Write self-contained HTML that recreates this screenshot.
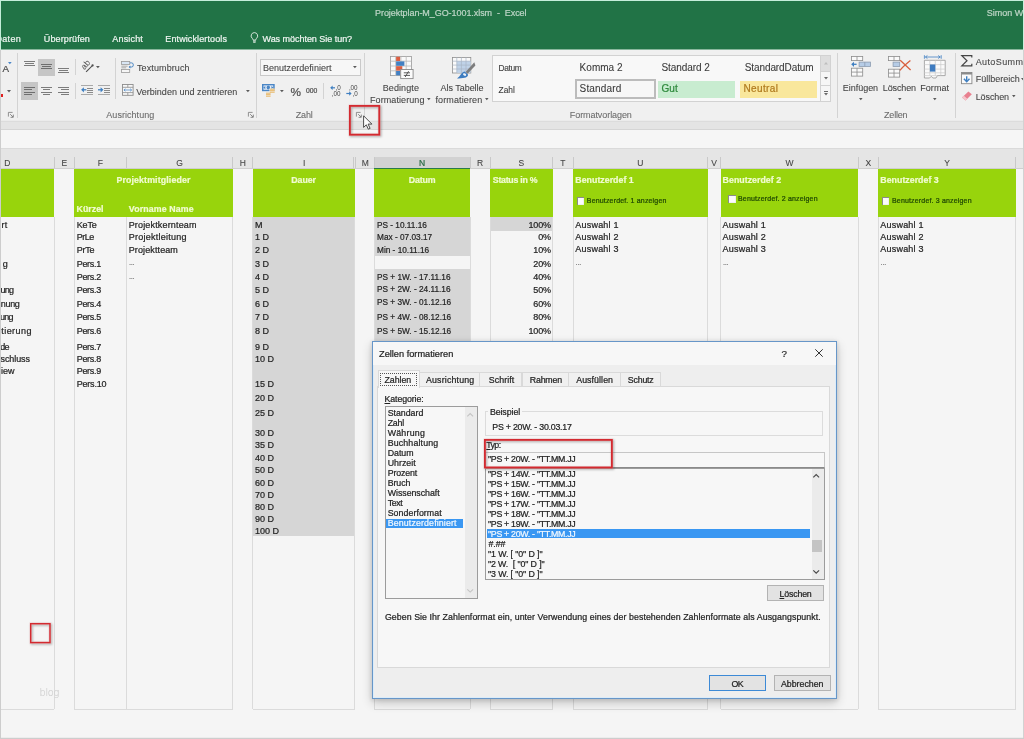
<!DOCTYPE html>
<html lang="de"><head><meta charset="utf-8"><title>Projektplan-M_GO-1001.xlsm - Excel</title>
<style>
html,body{margin:0;padding:0}
body{width:1024px;height:739px;overflow:hidden;background:#f5f5f5;font-family:"Liberation Sans",sans-serif;position:relative}
#r{position:absolute;left:0;top:0;width:1024px;height:739px;overflow:hidden;will-change:transform}
#r div,#r span,#r svg{position:absolute;display:block}
#r span{white-space:pre;line-height:1;-webkit-text-stroke:0.22px}
#r svg{overflow:visible}
</style></head><body><div id="r">
<div style="left:1.00px;top:1.00px;width:1022.00px;height:48.00px;background:#217346;"></div>
<div style="left:1.00px;top:49.00px;width:1022.00px;height:1.00px;background:#89b79d;"></div>
<div style="left:1.00px;top:50.00px;width:1022.00px;height:71.00px;background:#f0f0f0;"></div>
<div style="left:1.00px;top:121.00px;width:1022.00px;height:9.00px;background:#e4e4e4;"></div>
<div style="left:1.00px;top:120.00px;width:1022.00px;height:1.00px;background:#ebebeb;"></div>
<div style="left:1.00px;top:121.00px;width:1022.00px;height:1.00px;background:#dcdcdc;"></div>
<div style="left:1.00px;top:129.00px;width:1022.00px;height:1.00px;background:#d5d5d5;"></div>
<div style="left:1.00px;top:130.00px;width:1022.00px;height:18.00px;background:#f6f6f6;"></div>
<div style="left:1.00px;top:148.00px;width:1022.00px;height:21.00px;background:#e5e5e5;"></div>
<div style="left:1.00px;top:148.00px;width:1022.00px;height:1.00px;background:#dadada;"></div>
<span style="left:375.00px;top:9.00px;font-size:9.0px;color:#bdd5c6;letter-spacing:-0.057px;">Projektplan-M_GO-1001.xlsm  -  Excel</span>
<span style="left:986.80px;top:9.00px;font-size:9.0px;color:#bdd5c6;">Simon Wagner</span>
<span style="left:-4.50px;top:35.00px;font-size:9.0px;color:#eef4f0;letter-spacing:0.297px;">Daten</span>
<span style="left:43.80px;top:35.00px;font-size:9.0px;color:#eef4f0;letter-spacing:0.117px;">Überprüfen</span>
<span style="left:112.30px;top:35.00px;font-size:9.0px;color:#eef4f0;letter-spacing:0.169px;">Ansicht</span>
<span style="left:165.30px;top:35.00px;font-size:9.0px;color:#eef4f0;letter-spacing:0.112px;">Entwicklertools</span>
<span style="left:262.50px;top:35.00px;font-size:9.0px;color:#eef4f0;letter-spacing:-0.031px;">Was möchten Sie tun?</span>
<svg style="left:249.50px;top:32.20px;" width="9" height="11" viewBox="0 0 9 11"><path d="M4.4 0.6a3.3 3.3 0 0 0-2 5.9c.5.5.6 1 .6 1.6h2.8c0-.6.1-1.1.6-1.6a3.3 3.3 0 0 0-2-5.9z" fill="none" stroke="#e6efe9" stroke-width="0.9"/><path d="M3 9.1h2.8M3.2 10.3h2.4" stroke="#e6efe9" stroke-width="0.9"/></svg>
<div style="left:374.20px;top:157.00px;width:95.90px;height:11.80px;background:#d2d2d2;"></div>
<div style="left:374.20px;top:167.80px;width:95.90px;height:1.20px;background:#2a7a4b;"></div>
<div style="left:53.80px;top:157.00px;width:1.00px;height:11.80px;background:#c9c9c9;"></div>
<span style="left:4.20px;top:159.00px;font-size:8.5px;color:#444;-webkit-text-stroke:0.08px;">D</span>
<div style="left:73.80px;top:157.00px;width:1.00px;height:11.80px;background:#c9c9c9;"></div>
<span style="left:61.47px;top:159.00px;font-size:8.5px;color:#444;-webkit-text-stroke:0.08px;">E</span>
<div style="left:126.00px;top:157.00px;width:1.00px;height:11.80px;background:#c9c9c9;"></div>
<span style="left:97.80px;top:159.00px;font-size:8.5px;color:#444;-webkit-text-stroke:0.08px;">F</span>
<div style="left:232.30px;top:157.00px;width:1.00px;height:11.80px;background:#c9c9c9;"></div>
<span style="left:176.34px;top:159.00px;font-size:8.5px;color:#444;-webkit-text-stroke:0.08px;">G</span>
<div style="left:252.20px;top:157.00px;width:1.00px;height:11.80px;background:#c9c9c9;"></div>
<span style="left:239.68px;top:159.00px;font-size:8.5px;color:#444;-webkit-text-stroke:0.08px;">H</span>
<div style="left:355.10px;top:157.00px;width:1.00px;height:11.80px;background:#c9c9c9;"></div>
<span style="left:302.97px;top:159.00px;font-size:8.5px;color:#444;-webkit-text-stroke:0.08px;">I</span>
<div style="left:373.70px;top:157.00px;width:1.00px;height:11.80px;background:#c9c9c9;"></div>
<span style="left:361.66px;top:159.00px;font-size:8.5px;color:#444;-webkit-text-stroke:0.08px;">M</span>
<div style="left:469.60px;top:157.00px;width:1.00px;height:11.80px;background:#c9c9c9;"></div>
<span style="left:419.08px;top:159.00px;font-size:8.5px;color:#2a6b45;">N</span>
<div style="left:489.50px;top:157.00px;width:1.00px;height:11.80px;background:#c9c9c9;"></div>
<span style="left:476.98px;top:159.00px;font-size:8.5px;color:#444;-webkit-text-stroke:0.08px;">R</span>
<div style="left:552.10px;top:157.00px;width:1.00px;height:11.80px;background:#c9c9c9;"></div>
<span style="left:518.47px;top:159.00px;font-size:8.5px;color:#444;-webkit-text-stroke:0.08px;">S</span>
<div style="left:572.70px;top:157.00px;width:1.00px;height:11.80px;background:#c9c9c9;"></div>
<span style="left:560.30px;top:159.00px;font-size:8.5px;color:#444;-webkit-text-stroke:0.08px;">T</span>
<div style="left:707.10px;top:157.00px;width:1.00px;height:11.80px;background:#c9c9c9;"></div>
<span style="left:637.33px;top:159.00px;font-size:8.5px;color:#444;-webkit-text-stroke:0.08px;">U</span>
<div style="left:720.00px;top:157.00px;width:1.00px;height:11.80px;background:#c9c9c9;"></div>
<span style="left:711.22px;top:159.00px;font-size:8.5px;color:#444;-webkit-text-stroke:0.08px;">V</span>
<div style="left:857.80px;top:157.00px;width:1.00px;height:11.80px;background:#c9c9c9;"></div>
<span style="left:785.39px;top:159.00px;font-size:8.5px;color:#444;-webkit-text-stroke:0.08px;">W</span>
<div style="left:877.70px;top:157.00px;width:1.00px;height:11.80px;background:#c9c9c9;"></div>
<span style="left:865.42px;top:159.00px;font-size:8.5px;color:#444;-webkit-text-stroke:0.08px;">X</span>
<div style="left:1015.30px;top:157.00px;width:1.00px;height:11.80px;background:#c9c9c9;"></div>
<span style="left:944.17px;top:159.00px;font-size:8.5px;color:#444;-webkit-text-stroke:0.08px;">Y</span>
<div style="left:353.10px;top:157.00px;width:1.00px;height:11.80px;background:#c9c9c9;"></div>
<div style="left:1.20px;top:168.40px;width:1021.50px;height:0.60px;background:#cfcfcf;"></div>
<div style="left:374.20px;top:167.80px;width:95.90px;height:1.20px;background:#2a7a4b;"></div>
<div style="left:1.30px;top:169.00px;width:53.00px;height:48.30px;background:#98d40c;"></div>
<div style="left:1.30px;top:708.80px;width:53.00px;height:1.00px;background:#dbdbdb;"></div>
<div style="left:53.80px;top:217.30px;width:1.00px;height:492.00px;background:#dbdbdb;"></div>
<div style="left:74.30px;top:169.00px;width:158.50px;height:48.30px;background:#98d40c;"></div>
<div style="left:74.30px;top:708.80px;width:158.50px;height:1.00px;background:#dbdbdb;"></div>
<div style="left:73.80px;top:217.30px;width:1.00px;height:492.00px;background:#dbdbdb;"></div>
<div style="left:232.30px;top:217.30px;width:1.00px;height:492.00px;background:#dbdbdb;"></div>
<div style="left:252.70px;top:169.00px;width:102.10px;height:48.30px;background:#98d40c;"></div>
<div style="left:252.70px;top:708.80px;width:102.10px;height:1.00px;background:#dbdbdb;"></div>
<div style="left:252.20px;top:217.30px;width:1.00px;height:492.00px;background:#dbdbdb;"></div>
<div style="left:354.30px;top:217.30px;width:1.00px;height:492.00px;background:#dbdbdb;"></div>
<div style="left:374.20px;top:169.00px;width:95.90px;height:48.30px;background:#98d40c;"></div>
<div style="left:374.20px;top:708.80px;width:95.90px;height:1.00px;background:#dbdbdb;"></div>
<div style="left:373.70px;top:217.30px;width:1.00px;height:492.00px;background:#dbdbdb;"></div>
<div style="left:469.60px;top:217.30px;width:1.00px;height:492.00px;background:#dbdbdb;"></div>
<div style="left:490.00px;top:169.00px;width:62.60px;height:48.30px;background:#98d40c;"></div>
<div style="left:490.00px;top:708.80px;width:62.60px;height:1.00px;background:#dbdbdb;"></div>
<div style="left:489.50px;top:217.30px;width:1.00px;height:492.00px;background:#dbdbdb;"></div>
<div style="left:552.10px;top:217.30px;width:1.00px;height:492.00px;background:#dbdbdb;"></div>
<div style="left:573.20px;top:169.00px;width:134.40px;height:48.30px;background:#98d40c;"></div>
<div style="left:573.20px;top:708.80px;width:134.40px;height:1.00px;background:#dbdbdb;"></div>
<div style="left:572.70px;top:217.30px;width:1.00px;height:492.00px;background:#dbdbdb;"></div>
<div style="left:707.10px;top:217.30px;width:1.00px;height:492.00px;background:#dbdbdb;"></div>
<div style="left:720.50px;top:169.00px;width:137.80px;height:48.30px;background:#98d40c;"></div>
<div style="left:720.50px;top:708.80px;width:137.80px;height:1.00px;background:#dbdbdb;"></div>
<div style="left:720.00px;top:217.30px;width:1.00px;height:492.00px;background:#dbdbdb;"></div>
<div style="left:857.80px;top:217.30px;width:1.00px;height:492.00px;background:#dbdbdb;"></div>
<div style="left:878.20px;top:169.00px;width:137.60px;height:48.30px;background:#98d40c;"></div>
<div style="left:878.20px;top:708.80px;width:137.60px;height:1.00px;background:#dbdbdb;"></div>
<div style="left:877.70px;top:217.30px;width:1.00px;height:492.00px;background:#dbdbdb;"></div>
<div style="left:1015.30px;top:217.30px;width:1.00px;height:492.00px;background:#dbdbdb;"></div>
<div style="left:126.00px;top:217.30px;width:1.00px;height:492.00px;background:#dbdbdb;"></div>
<div style="left:253.20px;top:217.30px;width:101.10px;height:319.20px;background:#d6d6d6;"></div>
<div style="left:374.70px;top:217.30px;width:94.90px;height:38.90px;background:#d6d6d6;"></div>
<div style="left:374.70px;top:268.60px;width:94.90px;height:76.40px;background:#d6d6d6;"></div>
<div style="left:490.50px;top:217.30px;width:61.60px;height:13.50px;background:#d6d6d6;"></div>
<span style="left:116.40px;top:176.00px;font-size:8.8px;color:#f0fbd0;font-weight:700;letter-spacing:0.136px;">Projektmitglieder</span>
<span style="left:76.60px;top:205.00px;font-size:8.8px;color:#f0fbd0;font-weight:700;letter-spacing:0.018px;">Kürzel</span>
<span style="left:128.80px;top:205.00px;font-size:8.8px;color:#f0fbd0;font-weight:700;letter-spacing:0.132px;">Vorname Name</span>
<span style="left:291.35px;top:176.00px;font-size:8.8px;color:#f0fbd0;font-weight:700;letter-spacing:-0.089px;">Dauer</span>
<span style="left:408.85px;top:176.00px;font-size:8.8px;color:#f0fbd0;font-weight:700;letter-spacing:-0.176px;">Datum</span>
<span style="left:492.80px;top:176.00px;font-size:8.8px;color:#f0fbd0;font-weight:700;letter-spacing:-0.266px;">Status in %</span>
<span style="left:575.30px;top:176.00px;font-size:8.8px;color:#f0fbd0;font-weight:700;letter-spacing:0.024px;">Benutzerdef 1</span>
<span style="left:722.60px;top:176.00px;font-size:8.8px;color:#f0fbd0;font-weight:700;letter-spacing:0.024px;">Benutzerdef 2</span>
<span style="left:880.30px;top:176.00px;font-size:8.8px;color:#f0fbd0;font-weight:700;letter-spacing:0.024px;">Benutzerdef 3</span>
<span style="left:1.60px;top:221.00px;font-size:9.0px;color:#242424;letter-spacing:0.051px;">rt</span>
<span style="left:2.70px;top:260.00px;font-size:9.0px;color:#242424;letter-spacing:-0.106px;">g</span>
<span style="left:0.40px;top:286.00px;font-size:9.0px;color:#242424;letter-spacing:-0.706px;">ung</span>
<span style="left:0.70px;top:300.00px;font-size:9.0px;color:#242424;letter-spacing:-0.281px;">nung</span>
<span style="left:-0.10px;top:313.00px;font-size:9.0px;color:#242424;letter-spacing:-0.706px;">ung</span>
<span style="left:1.30px;top:327.00px;font-size:9.0px;color:#242424;letter-spacing:0.440px;">tierung</span>
<span style="left:0.30px;top:343.00px;font-size:9.0px;color:#242424;letter-spacing:-0.706px;">de</span>
<span style="left:0.60px;top:355.00px;font-size:9.0px;color:#242424;letter-spacing:-0.116px;">schluss</span>
<span style="left:0.90px;top:367.00px;font-size:9.0px;color:#242424;letter-spacing:0.098px;">iew</span>
<span style="left:76.70px;top:221.00px;font-size:9.0px;color:#242424;letter-spacing:-0.129px;">KeTe</span>
<span style="left:76.70px;top:233.00px;font-size:9.0px;color:#242424;letter-spacing:-0.503px;">PrLe</span>
<span style="left:76.70px;top:246.00px;font-size:9.0px;color:#242424;letter-spacing:-0.227px;">PrTe</span>
<span style="left:76.70px;top:260.00px;font-size:9.0px;color:#242424;letter-spacing:-0.302px;">Pers.1</span>
<span style="left:76.70px;top:273.00px;font-size:9.0px;color:#242424;letter-spacing:-0.302px;">Pers.2</span>
<span style="left:76.70px;top:286.00px;font-size:9.0px;color:#242424;letter-spacing:-0.302px;">Pers.3</span>
<span style="left:76.70px;top:300.00px;font-size:9.0px;color:#242424;letter-spacing:-0.302px;">Pers.4</span>
<span style="left:76.70px;top:313.00px;font-size:9.0px;color:#242424;letter-spacing:-0.302px;">Pers.5</span>
<span style="left:76.70px;top:327.00px;font-size:9.0px;color:#242424;letter-spacing:-0.302px;">Pers.6</span>
<span style="left:76.70px;top:343.00px;font-size:9.0px;color:#242424;letter-spacing:-0.302px;">Pers.7</span>
<span style="left:76.70px;top:355.00px;font-size:9.0px;color:#242424;letter-spacing:-0.302px;">Pers.8</span>
<span style="left:76.70px;top:367.00px;font-size:9.0px;color:#242424;letter-spacing:-0.302px;">Pers.9</span>
<span style="left:76.70px;top:380.00px;font-size:9.0px;color:#242424;letter-spacing:-0.203px;">Pers.10</span>
<span style="left:128.70px;top:221.00px;font-size:9.0px;color:#242424;letter-spacing:0.165px;">Projektkernteam</span>
<span style="left:128.70px;top:233.00px;font-size:9.0px;color:#242424;letter-spacing:0.255px;">Projektleitung</span>
<span style="left:128.70px;top:246.00px;font-size:9.0px;color:#242424;letter-spacing:0.116px;">Projektteam</span>
<span style="left:128.90px;top:259.00px;font-size:7.5px;color:#7a7a7a;letter-spacing:-0.217px;">...</span>
<span style="left:128.90px;top:273.00px;font-size:7.5px;color:#7a7a7a;letter-spacing:-0.217px;">...</span>
<span style="left:255.00px;top:221.00px;font-size:9.0px;color:#242424;">M</span>
<span style="left:255.00px;top:233.00px;font-size:9.0px;color:#242424;">1 D</span>
<span style="left:255.00px;top:246.00px;font-size:9.0px;color:#242424;">2 D</span>
<span style="left:255.00px;top:260.00px;font-size:9.0px;color:#242424;">3 D</span>
<span style="left:255.00px;top:273.00px;font-size:9.0px;color:#242424;">4 D</span>
<span style="left:255.00px;top:286.00px;font-size:9.0px;color:#242424;">5 D</span>
<span style="left:255.00px;top:300.00px;font-size:9.0px;color:#242424;">6 D</span>
<span style="left:255.00px;top:313.00px;font-size:9.0px;color:#242424;">7 D</span>
<span style="left:255.00px;top:327.00px;font-size:9.0px;color:#242424;">8 D</span>
<span style="left:255.00px;top:343.00px;font-size:9.0px;color:#242424;">9 D</span>
<span style="left:255.00px;top:355.00px;font-size:9.0px;color:#242424;">10 D</span>
<span style="left:255.00px;top:380.00px;font-size:9.0px;color:#242424;">15 D</span>
<span style="left:255.00px;top:394.00px;font-size:9.0px;color:#242424;">20 D</span>
<span style="left:255.00px;top:409.00px;font-size:9.0px;color:#242424;">25 D</span>
<span style="left:255.00px;top:429.00px;font-size:9.0px;color:#242424;">30 D</span>
<span style="left:255.00px;top:441.00px;font-size:9.0px;color:#242424;">35 D</span>
<span style="left:255.00px;top:454.00px;font-size:9.0px;color:#242424;">40 D</span>
<span style="left:255.00px;top:466.00px;font-size:9.0px;color:#242424;">50 D</span>
<span style="left:255.00px;top:479.00px;font-size:9.0px;color:#242424;">60 D</span>
<span style="left:255.00px;top:491.00px;font-size:9.0px;color:#242424;">70 D</span>
<span style="left:255.00px;top:503.00px;font-size:9.0px;color:#242424;">80 D</span>
<span style="left:255.00px;top:515.00px;font-size:9.0px;color:#242424;">90 D</span>
<span style="left:255.00px;top:527.00px;font-size:9.0px;color:#242424;">100 D</span>
<span style="left:376.70px;top:221.00px;font-size:9.0px;color:#242424;transform:scaleX(0.9180);transform-origin:0 0;">PS - 10.11.16</span>
<span style="left:376.70px;top:233.00px;font-size:9.0px;color:#242424;transform:scaleX(0.9180);transform-origin:0 0;">Max - 07.03.17</span>
<span style="left:376.70px;top:246.00px;font-size:9.0px;color:#242424;transform:scaleX(0.9180);transform-origin:0 0;">Min - 10.11.16</span>
<span style="left:376.70px;top:273.00px;font-size:9.0px;color:#242424;transform:scaleX(0.9180);transform-origin:0 0;">PS + 1W. - 17.11.16</span>
<span style="left:376.70px;top:285.00px;font-size:9.0px;color:#242424;transform:scaleX(0.9180);transform-origin:0 0;">PS + 2W. - 24.11.16</span>
<span style="left:376.70px;top:298.00px;font-size:9.0px;color:#242424;transform:scaleX(0.9180);transform-origin:0 0;">PS + 3W. - 01.12.16</span>
<span style="left:376.70px;top:313.00px;font-size:9.0px;color:#242424;transform:scaleX(0.9180);transform-origin:0 0;">PS + 4W. - 08.12.16</span>
<span style="left:376.70px;top:327.00px;font-size:9.0px;color:#242424;transform:scaleX(0.9180);transform-origin:0 0;">PS + 5W. - 15.12.16</span>
<span style="left:528.47px;top:221.00px;font-size:9.0px;color:#242424;letter-spacing:-0.173px;">100%</span>
<span style="left:538.18px;top:233.00px;font-size:9.0px;color:#242424;letter-spacing:-0.195px;">0%</span>
<span style="left:533.33px;top:246.00px;font-size:9.0px;color:#242424;letter-spacing:-0.180px;">10%</span>
<span style="left:533.33px;top:260.00px;font-size:9.0px;color:#242424;letter-spacing:-0.180px;">20%</span>
<span style="left:533.33px;top:273.00px;font-size:9.0px;color:#242424;letter-spacing:-0.180px;">40%</span>
<span style="left:533.33px;top:286.00px;font-size:9.0px;color:#242424;letter-spacing:-0.180px;">50%</span>
<span style="left:533.33px;top:300.00px;font-size:9.0px;color:#242424;letter-spacing:-0.180px;">60%</span>
<span style="left:533.33px;top:313.00px;font-size:9.0px;color:#242424;letter-spacing:-0.180px;">80%</span>
<span style="left:528.47px;top:327.00px;font-size:9.0px;color:#242424;letter-spacing:-0.173px;">100%</span>
<span style="left:575.30px;top:221.00px;font-size:9.0px;color:#242424;letter-spacing:0.208px;">Auswahl 1</span>
<span style="left:575.30px;top:233.00px;font-size:9.0px;color:#242424;letter-spacing:0.208px;">Auswahl 2</span>
<span style="left:575.30px;top:245.00px;font-size:9.0px;color:#242424;letter-spacing:0.208px;">Auswahl 3</span>
<span style="left:575.60px;top:259.00px;font-size:7.5px;color:#7a7a7a;letter-spacing:-0.217px;">...</span>
<span style="left:722.60px;top:221.00px;font-size:9.0px;color:#242424;letter-spacing:0.208px;">Auswahl 1</span>
<span style="left:722.60px;top:233.00px;font-size:9.0px;color:#242424;letter-spacing:0.208px;">Auswahl 2</span>
<span style="left:722.60px;top:245.00px;font-size:9.0px;color:#242424;letter-spacing:0.208px;">Auswahl 3</span>
<span style="left:722.90px;top:259.00px;font-size:7.5px;color:#7a7a7a;letter-spacing:-0.217px;">...</span>
<span style="left:880.30px;top:221.00px;font-size:9.0px;color:#242424;letter-spacing:0.208px;">Auswahl 1</span>
<span style="left:880.30px;top:233.00px;font-size:9.0px;color:#242424;letter-spacing:0.208px;">Auswahl 2</span>
<span style="left:880.30px;top:245.00px;font-size:9.0px;color:#242424;letter-spacing:0.208px;">Auswahl 3</span>
<span style="left:880.60px;top:259.00px;font-size:7.5px;color:#7a7a7a;letter-spacing:-0.217px;">...</span>
<div style="left:576.80px;top:197.00px;width:7.60px;height:7.80px;background:#fbfbfb;box-shadow:inset 1px 1px 0 #8b8b8b, inset -0.5px -0.5px 0 #e4e4e4;"></div>
<span style="left:586.80px;top:197.00px;font-size:7.0px;color:#1f4704;letter-spacing:0.166px;">Benutzerdef. 1 anzeigen</span>
<div style="left:728.10px;top:195.00px;width:7.60px;height:7.80px;background:#fbfbfb;box-shadow:inset 1px 1px 0 #8b8b8b, inset -0.5px -0.5px 0 #e4e4e4;"></div>
<span style="left:738.00px;top:195.00px;font-size:7.0px;color:#1f4704;letter-spacing:0.166px;">Benutzerdef. 2 anzeigen</span>
<div style="left:881.80px;top:197.00px;width:7.60px;height:7.80px;background:#fbfbfb;box-shadow:inset 1px 1px 0 #8b8b8b, inset -0.5px -0.5px 0 #e4e4e4;"></div>
<span style="left:892.00px;top:197.00px;font-size:7.0px;color:#1f4704;letter-spacing:0.166px;">Benutzerdef. 3 anzeigen</span>
<span style="left:39.50px;top:688.00px;font-size:9.6px;color:#d2d2d2;font-family:'DejaVu Sans Light','DejaVu Sans',sans-serif;letter-spacing:-0.199px;">blog</span>
<div style="left:16.90px;top:53.00px;width:1.00px;height:64.60px;background:#d3d3d3;"></div>
<div style="left:256.10px;top:53.00px;width:1.00px;height:64.60px;background:#d3d3d3;"></div>
<div style="left:364.10px;top:53.00px;width:1.00px;height:64.60px;background:#d3d3d3;"></div>
<div style="left:836.90px;top:53.00px;width:1.00px;height:64.60px;background:#d3d3d3;"></div>
<div style="left:954.80px;top:53.00px;width:1.00px;height:64.60px;background:#d3d3d3;"></div>
<div style="left:74.50px;top:58.70px;width:1.00px;height:16.30px;background:#d3d3d3;"></div>
<div style="left:74.50px;top:82.60px;width:1.00px;height:16.20px;background:#d3d3d3;"></div>
<div style="left:114.90px;top:58.00px;width:1.00px;height:41.00px;background:#d3d3d3;"></div>
<div style="left:322.90px;top:82.50px;width:1.00px;height:16.10px;background:#d3d3d3;"></div>
<span style="left:2.40px;top:64.00px;font-size:9.8px;color:#4a4a4a;letter-spacing:-0.737px;">A</span>
<svg style="left:7.60px;top:61.50px;" width="3.7" height="2.3" viewBox="0 0 3.7 2.3"><path d="M0 0h3.7l-1.85 2.3z" fill="#4a86c8"/></svg>
<svg style="left:6.90px;top:90.10px;" width="4" height="2.4" viewBox="0 0 4 2.4"><path d="M0 0h4l-2.0 2.4z" fill="#5a5a5a"/></svg>
<div style="left:0.60px;top:93.90px;width:2.10px;height:3.10px;background:#e02020;"></div>
<svg style="left:8.00px;top:112.20px;" width="6" height="6" viewBox="0 0 6 6"><path d="M0.4 4.6V0.4H4.6" fill="none" stroke="#7a7a7a" stroke-width="0.8"/><path d="M2.2 2.2L5 5M5.3 2.6V5.3H2.6" fill="none" stroke="#7a7a7a" stroke-width="0.9"/></svg>
<div style="left:23.90px;top:60.65px;width:10.90px;height:0.90px;background:#7c7c7c;"></div>
<div style="left:24.90px;top:62.95px;width:8.90px;height:0.90px;background:#7c7c7c;"></div>
<div style="left:23.90px;top:65.15px;width:10.90px;height:0.90px;background:#7c7c7c;"></div>
<div style="left:38.00px;top:58.70px;width:16.80px;height:17.10px;background:#c6c6c6;"></div>
<div style="left:41.00px;top:64.05px;width:10.90px;height:0.90px;background:#6e6e6e;"></div>
<div style="left:42.00px;top:66.15px;width:8.90px;height:0.90px;background:#6e6e6e;"></div>
<div style="left:41.00px;top:68.25px;width:10.90px;height:0.90px;background:#6e6e6e;"></div>
<div style="left:57.80px;top:67.85px;width:10.90px;height:0.90px;background:#7c7c7c;"></div>
<div style="left:58.80px;top:70.05px;width:8.90px;height:0.90px;background:#7c7c7c;"></div>
<div style="left:57.80px;top:72.15px;width:10.90px;height:0.90px;background:#7c7c7c;"></div>
<div style="left:21.10px;top:82.40px;width:16.70px;height:17.30px;background:#c6c6c6;"></div>
<div style="left:23.90px;top:86.95px;width:10.90px;height:0.90px;background:#6e6e6e;"></div>
<div style="left:23.90px;top:89.15px;width:7.80px;height:0.90px;background:#6e6e6e;"></div>
<div style="left:23.90px;top:91.55px;width:10.90px;height:0.90px;background:#6e6e6e;"></div>
<div style="left:23.90px;top:93.95px;width:7.80px;height:0.90px;background:#6e6e6e;"></div>
<div style="left:41.00px;top:86.95px;width:10.90px;height:0.90px;background:#7c7c7c;"></div>
<div style="left:42.60px;top:89.15px;width:7.50px;height:0.90px;background:#7c7c7c;"></div>
<div style="left:41.00px;top:91.55px;width:10.90px;height:0.90px;background:#7c7c7c;"></div>
<div style="left:42.60px;top:93.95px;width:7.50px;height:0.90px;background:#7c7c7c;"></div>
<div style="left:57.80px;top:86.95px;width:10.90px;height:0.90px;background:#7c7c7c;"></div>
<div style="left:60.90px;top:89.15px;width:7.80px;height:0.90px;background:#7c7c7c;"></div>
<div style="left:57.80px;top:91.55px;width:10.90px;height:0.90px;background:#7c7c7c;"></div>
<div style="left:60.90px;top:93.95px;width:7.80px;height:0.90px;background:#7c7c7c;"></div>
<svg style="left:80.00px;top:59.00px;" width="14" height="15" viewBox="0 0 14 15"><text x="0" y="0" transform="translate(4.6,11.2) rotate(-50)" font-size="8.6" fill="#4f4f4f" font-family="Liberation Sans,sans-serif">ab</text><path d="M6.1 12.9L12.4 6.7" stroke="#4f4f4f" stroke-width="1.1"/><circle cx="12.6" cy="6.4" r="1.1" fill="#4f4f4f"/></svg>
<svg style="left:96.30px;top:66.10px;" width="3.8" height="2.3" viewBox="0 0 3.8 2.3"><path d="M0 0h3.8l-1.9 2.3z" fill="#5a5a5a"/></svg>
<div style="left:81.00px;top:85.30px;width:12.00px;height:1.00px;background:#a9a9a9;"></div>
<div style="left:81.00px;top:94.40px;width:12.00px;height:1.00px;background:#a9a9a9;"></div>
<div style="left:87.10px;top:88.05px;width:5.90px;height:0.90px;background:#8a8a8a;"></div>
<div style="left:87.10px;top:90.15px;width:5.90px;height:0.90px;background:#8a8a8a;"></div>
<div style="left:87.10px;top:92.15px;width:5.90px;height:0.90px;background:#8a8a8a;"></div>
<svg style="left:81.00px;top:87.40px;" width="6" height="5.6" viewBox="0 0 6 5.6"><path d="M1.6 2.8H5.4" stroke="#3f7fc1" stroke-width="1.3"/><path d="M2.9 0.2L0.1 2.8L2.9 5.4z" fill="#3f7fc1"/></svg>
<div style="left:97.90px;top:85.30px;width:12.00px;height:1.00px;background:#a9a9a9;"></div>
<div style="left:97.90px;top:94.40px;width:12.00px;height:1.00px;background:#a9a9a9;"></div>
<div style="left:104.00px;top:88.05px;width:5.90px;height:0.90px;background:#8a8a8a;"></div>
<div style="left:104.00px;top:90.15px;width:5.90px;height:0.90px;background:#8a8a8a;"></div>
<div style="left:104.00px;top:92.15px;width:5.90px;height:0.90px;background:#8a8a8a;"></div>
<svg style="left:97.90px;top:87.40px;" width="6" height="5.6" viewBox="0 0 6 5.6"><path d="M0 2.8H4" stroke="#3f7fc1" stroke-width="1.3"/><path d="M2.6 0.2L5.4 2.8L2.6 5.4z" fill="#3f7fc1"/></svg>
<svg style="left:121.30px;top:60.60px;" width="13" height="12" viewBox="0 0 13 12"><rect x="0.5" y="0.5" width="8.2" height="2.9" fill="#d9e6f4" stroke="#9a9a9a" stroke-width="0.8"/><path d="M0.4 5.2H6.6M0.4 6.8H5.2" stroke="#9a9a9a" stroke-width="0.8"/><rect x="0.5" y="8.5" width="8.2" height="2.9" fill="#f6f6f6" stroke="#9a9a9a" stroke-width="0.8"/><path d="M9 1.9H10.6A1.7 2 0 0 1 10.6 6H8.6" fill="none" stroke="#3f7fc1" stroke-width="0.9"/><path d="M9.3 4.5L7.6 6L9.3 7.5z" fill="#3f7fc1"/></svg>
<span style="left:137.00px;top:64.00px;font-size:9.0px;color:#444;-webkit-text-stroke:0.08px;letter-spacing:0.107px;">Textumbruch</span>
<svg style="left:121.50px;top:84.40px;" width="12" height="12" viewBox="0 0 12 12"><rect x="0.5" y="0.5" width="10.6" height="10.8" fill="#f8f8f8" stroke="#8c8c8c" stroke-width="0.9"/><path d="M0.5 3.3H11.1M0.5 8.6H11.1M5.8 0.5V3.3M5.8 8.6V11.3" stroke="#8c8c8c" stroke-width="0.8"/><path d="M2.2 6H9.4" stroke="#3f7fc1" stroke-width="0.7"/><path d="M3.4 4.7L1.9 6L3.4 7.3M8.2 4.7L9.7 6L8.2 7.3" fill="none" stroke="#3f7fc1" stroke-width="0.7"/></svg>
<span style="left:136.20px;top:88.00px;font-size:9.0px;color:#444;-webkit-text-stroke:0.08px;letter-spacing:0.026px;">Verbinden und zentrieren</span>
<svg style="left:245.60px;top:90.20px;" width="3.8" height="2.3" viewBox="0 0 3.8 2.3"><path d="M0 0h3.8l-1.9 2.3z" fill="#5a5a5a"/></svg>
<span style="left:106.30px;top:111.00px;font-size:9.0px;color:#6a6a6a;-webkit-text-stroke:0.08px;letter-spacing:0.043px;">Ausrichtung</span>
<svg style="left:248.40px;top:112.40px;" width="6" height="6" viewBox="0 0 6 6"><path d="M0.4 4.6V0.4H4.6" fill="none" stroke="#7a7a7a" stroke-width="0.8"/><path d="M2.2 2.2L5 5M5.3 2.6V5.3H2.6" fill="none" stroke="#7a7a7a" stroke-width="0.9"/></svg>
<div style="left:260.30px;top:58.60px;width:100.30px;height:17.30px;background:#f7f7f7;box-sizing:border-box;border:1px solid #c9c9c9;"></div>
<span style="left:262.90px;top:64.00px;font-size:9.0px;color:#444;-webkit-text-stroke:0.08px;letter-spacing:0.039px;">Benutzerdefiniert</span>
<svg style="left:353.20px;top:66.00px;" width="3.8" height="2.3" viewBox="0 0 3.8 2.3"><path d="M0 0h3.8l-1.9 2.3z" fill="#5a5a5a"/></svg>
<svg style="left:262.20px;top:84.40px;" width="13" height="13" viewBox="0 0 13 13"><rect x="0" y="0" width="12.7" height="7.2" fill="#4a86c6"/><rect x="1.5" y="1.4" width="9.7" height="4.4" fill="#e4edf8"/><ellipse cx="6.3" cy="3.6" rx="1.7" ry="2" fill="#4a86c6"/><path d="M1.3 3.6L3.3 2V5.2zM11.4 3.6L9.4 2V5.2z" fill="#4a86c6"/><path d="M7.5 4.6h5.2v4.2H7.5z" fill="#f0f0f0"/><path d="M7.8 5.2h4.9M7.8 6.7h4.9M7.8 8.2h4.9M4 9.2h4.6M4 10.7h4.6M4 12.2h4.6" stroke="#e8b660" stroke-width="1"/></svg>
<svg style="left:279.50px;top:90.10px;" width="3.8" height="2.3" viewBox="0 0 3.8 2.3"><path d="M0 0h3.8l-1.9 2.3z" fill="#5a5a5a"/></svg>
<span style="left:290.60px;top:87.00px;font-size:11.8px;color:#505050;letter-spacing:-1.092px;">%</span>
<span style="left:306.00px;top:88.00px;font-size:6.8px;color:#505050;letter-spacing:-0.049px;">000</span>
<svg style="left:329.50px;top:85.40px;" width="12" height="11.5" viewBox="0 0 12 11.5"><path d="M1.6 2.8H5" stroke="#3f7fc1" stroke-width="1.2"/><path d="M2.6 0.6L0.2 2.8L2.6 5z" fill="#3f7fc1"/><text x="5.6" y="5" font-size="6.3" fill="#454545" font-family="Liberation Sans,sans-serif">,0</text><text x="1.6" y="10.6" font-size="6.3" fill="#454545" font-family="Liberation Sans,sans-serif" textLength="9">,00</text></svg>
<svg style="left:346.30px;top:85.40px;" width="12" height="11.5" viewBox="0 0 12 11.5"><text x="3" y="5" font-size="6.3" fill="#454545" font-family="Liberation Sans,sans-serif" textLength="8.4">,00</text><path d="M0.3 8.5H4" stroke="#3f7fc1" stroke-width="1.2"/><path d="M3.2 6.3L5.6 8.5L3.2 10.7z" fill="#3f7fc1"/><text x="6.6" y="10.6" font-size="6.3" fill="#454545" font-family="Liberation Sans,sans-serif">,0</text></svg>
<span style="left:295.80px;top:111.00px;font-size:9.0px;color:#6a6a6a;-webkit-text-stroke:0.08px;letter-spacing:-0.202px;">Zahl</span>
<svg style="left:355.60px;top:112.20px;" width="6" height="6" viewBox="0 0 6 6"><path d="M0.4 4.6V0.4H4.6" fill="none" stroke="#7a7a7a" stroke-width="0.8"/><path d="M2.2 2.2L5 5M5.3 2.6V5.3H2.6" fill="none" stroke="#7a7a7a" stroke-width="0.9"/></svg>
<svg style="left:389.50px;top:55.80px;" width="24" height="23" viewBox="0 0 24 23"><rect x="0.4" y="0.4" width="21.1" height="19.2" fill="#fafafa" stroke="#9a9a9a" stroke-width="0.8"/><path d="M5.7 0.4V19.6M10.9 0.4V19.6M16.2 0.4V19.6M0.4 5.2H21.5M0.4 10H21.5M0.4 14.8H21.5" stroke="#b8b8b8" stroke-width="0.8"/><rect x="6.1" y="0.8" width="4" height="4.2" fill="#dc5f43"/><rect x="6.1" y="5.4" width="8.3" height="4.4" fill="#4380c2"/><rect x="6.1" y="10.2" width="6.2" height="4.4" fill="#dc5f43"/><rect x="6.1" y="15" width="4" height="4.3" fill="#4380c2"/><rect x="10.7" y="13.5" width="12.4" height="9.1" fill="#fbfbfb" stroke="#8a8a8a" stroke-width="0.9"/><path d="M13.8 16.8H20M13.8 19.4H20M18.6 15.2L15.2 21" stroke="#4a4a4a" stroke-width="0.9"/></svg>
<span style="left:382.70px;top:84.00px;font-size:9.0px;color:#444;-webkit-text-stroke:0.08px;letter-spacing:0.096px;">Bedingte</span>
<span style="left:370.00px;top:96.00px;font-size:9.0px;color:#444;-webkit-text-stroke:0.08px;letter-spacing:0.081px;">Formatierung</span>
<svg style="left:427.20px;top:98.20px;" width="3.6" height="2.2" viewBox="0 0 3.6 2.2"><path d="M0 0h3.6l-1.8 2.2z" fill="#5a5a5a"/></svg>
<svg style="left:452.10px;top:57.30px;" width="25" height="23" viewBox="0 0 25 23"><rect x="0.4" y="0.4" width="18.4" height="15.6" fill="#fafafa" stroke="#8f8f8f" stroke-width="0.8"/><rect x="4.8" y="4.2" width="13.8" height="11.6" fill="#bfd2e8"/><path d="M4.8 0.4V16M9.4 0.4V16M14 0.4V16M0.4 4.2H18.8M0.4 8.1H18.8M0.4 12H18.8" stroke="#a9b6c6" stroke-width="0.7"/><path d="M22.3 5.2L23.4 8.5L15.6 16.8L13.6 15z" fill="#7d7d7d"/><path d="M12.6 14.6L16 17.6C16.2 20.4 13 21.6 5 21.4C8.4 19.8 8.6 15.6 12.6 14.6z" fill="#3d7cc0"/><ellipse cx="12.6" cy="17.6" rx="1.7" ry="1.2" transform="rotate(35 12.6 17.6)" fill="#eef3f9"/></svg>
<span style="left:440.60px;top:84.00px;font-size:9.0px;color:#444;-webkit-text-stroke:0.08px;letter-spacing:-0.042px;">Als Tabelle</span>
<span style="left:435.40px;top:96.00px;font-size:9.0px;color:#444;-webkit-text-stroke:0.08px;letter-spacing:0.125px;">formatieren</span>
<svg style="left:485.30px;top:98.20px;" width="3.6" height="2.2" viewBox="0 0 3.6 2.2"><path d="M0 0h3.6l-1.8 2.2z" fill="#5a5a5a"/></svg>
<div style="left:492.20px;top:54.60px;width:339.00px;height:47.70px;background:#f8f8f8;box-sizing:border-box;border:1px solid #d2d2d2;"></div>
<div style="left:820.00px;top:54.60px;width:11.20px;height:47.70px;background:#f6f6f6;box-sizing:border-box;border:1px solid #d2d2d2;"></div>
<div style="left:820.00px;top:54.60px;width:11.20px;height:17.20px;background:#dedede;box-sizing:border-box;border:1px solid #d2d2d2;"></div>
<div style="left:820.00px;top:85.00px;width:11.20px;height:1.00px;background:#d2d2d2;"></div>
<svg style="left:823.60px;top:61.50px;" width="4" height="2.4" viewBox="0 0 4 2.4"><path d="M0 2.4h4l-2-2.4z" fill="#bdbdbd"/></svg>
<svg style="left:823.60px;top:77.20px;" width="4" height="2.4" viewBox="0 0 4 2.4"><path d="M0 0h4l-2.0 2.4z" fill="#6a6a6a"/></svg>
<div style="left:823.50px;top:91.20px;width:4.20px;height:0.80px;background:#6a6a6a;"></div>
<svg style="left:823.60px;top:93.40px;" width="4" height="2.4" viewBox="0 0 4 2.4"><path d="M0 0h4l-2.0 2.4z" fill="#6a6a6a"/></svg>
<span style="left:498.50px;top:64.00px;font-size:8.4px;color:#3a3a3a;-webkit-text-stroke:0.08px;letter-spacing:-0.348px;">Datum</span>
<span style="left:498.50px;top:86.00px;font-size:8.4px;color:#3a3a3a;-webkit-text-stroke:0.08px;letter-spacing:0.015px;">Zahl</span>
<span style="left:579.60px;top:63.00px;font-size:10.0px;color:#3a3a3a;-webkit-text-stroke:0.08px;letter-spacing:0.029px;">Komma 2</span>
<div style="left:574.60px;top:79.20px;width:81.10px;height:20.20px;background:#f7f7f7;box-sizing:border-box;border:2px solid #bcbcbc;"></div>
<span style="left:579.60px;top:84.00px;font-size:10.0px;color:#3a3a3a;-webkit-text-stroke:0.08px;letter-spacing:0.152px;">Standard</span>
<span style="left:661.50px;top:63.00px;font-size:10.0px;color:#3a3a3a;-webkit-text-stroke:0.08px;letter-spacing:-0.063px;">Standard 2</span>
<div style="left:658.10px;top:81.00px;width:76.90px;height:16.60px;background:#c8ecd0;"></div>
<span style="left:661.50px;top:84.00px;font-size:10.0px;color:#2f8a3d;letter-spacing:0.094px;">Gut</span>
<span style="left:744.70px;top:63.00px;font-size:10.0px;color:#3a3a3a;-webkit-text-stroke:0.08px;letter-spacing:-0.088px;">StandardDatum</span>
<div style="left:739.90px;top:81.00px;width:77.00px;height:16.60px;background:#f9e79c;"></div>
<span style="left:743.50px;top:84.00px;font-size:10.0px;color:#b07a1e;letter-spacing:0.352px;">Neutral</span>
<span style="left:569.80px;top:111.00px;font-size:9.0px;color:#6c6c6c;-webkit-text-stroke:0.08px;letter-spacing:-0.073px;">Formatvorlagen</span>
<svg style="left:850.80px;top:55.90px;" width="20" height="21" viewBox="0 0 20 21"><rect x="0.4" y="0.4" width="11.3" height="4.2" fill="#fafafa" stroke="#8c8c8c" stroke-width="0.8"/><path d="M6 0.4V4.6" stroke="#8c8c8c" stroke-width="0.8"/><path d="M1.6 8.3H5.6" stroke="#3f7fc1" stroke-width="1.3"/><path d="M3 5.7L0.2 8.3L3 10.9z" fill="#3f7fc1"/><rect x="8.1" y="6.1" width="11.3" height="4.3" fill="#b6cce6" stroke="#8a9ab0" stroke-width="0.8"/><path d="M13.8 6.1V10.4" stroke="#8a9ab0" stroke-width="0.8"/><rect x="0.4" y="12.2" width="11.3" height="7.9" fill="#fafafa" stroke="#8c8c8c" stroke-width="0.8"/><path d="M6 12.2V20.1M0.4 16.1H11.7" stroke="#8c8c8c" stroke-width="0.8"/></svg>
<span style="left:842.80px;top:84.00px;font-size:9.0px;color:#444;-webkit-text-stroke:0.08px;letter-spacing:-0.029px;">Einfügen</span>
<svg style="left:858.60px;top:98.20px;" width="3.6" height="2.2" viewBox="0 0 3.6 2.2"><path d="M0 0h3.6l-1.8 2.2z" fill="#5a5a5a"/></svg>
<svg style="left:887.90px;top:55.90px;" width="23" height="22" viewBox="0 0 23 22"><rect x="0.4" y="0.4" width="11.3" height="4.2" fill="#fafafa" stroke="#8c8c8c" stroke-width="0.8"/><path d="M6 0.4V4.6" stroke="#8c8c8c" stroke-width="0.8"/><rect x="5.1" y="6.1" width="6.6" height="4.3" fill="#b6cce6" stroke="#8a9ab0" stroke-width="0.8"/><rect x="0.4" y="13.2" width="11.3" height="7.9" fill="#fafafa" stroke="#8c8c8c" stroke-width="0.8"/><path d="M6 13.2V21.1M0.4 17.1H11.7" stroke="#8c8c8c" stroke-width="0.8"/><path d="M12.2 4.2L22.6 14M22.4 4.6C19 7.4 15 10.6 12 14.4" fill="none" stroke="#d9603f" stroke-width="1.3"/></svg>
<span style="left:882.80px;top:84.00px;font-size:9.0px;color:#444;-webkit-text-stroke:0.08px;letter-spacing:-0.118px;">Löschen</span>
<svg style="left:897.50px;top:98.20px;" width="3.6" height="2.2" viewBox="0 0 3.6 2.2"><path d="M0 0h3.6l-1.8 2.2z" fill="#5a5a5a"/></svg>
<svg style="left:924.20px;top:55.20px;" width="22" height="24" viewBox="0 0 22 24"><path d="M0.4 0.2V3.8M17.2 0.2V3.8M1.4 2H16.2" stroke="#3f7fc1" stroke-width="0.8"/><path d="M3.4 0.5L1.4 2L3.4 3.5M14.2 0.5L16.2 2L14.2 3.5" fill="none" stroke="#3f7fc1" stroke-width="0.8"/><path d="M0.4 5.3H21.2V20.6H13.4L12 23H8.8L7.3 21.3L5.6 23H0.4z" fill="#fafafa" stroke="#959595" stroke-width="0.8"/><path d="M5.8 5.3V20.6M11.3 5.3V20.6M16.8 5.3V20.6M0.4 9.6H21.2M0.4 14.1H21.2M0.4 17.8H21.2M0.4 20.6H13" stroke="#cccccc" stroke-width="0.7"/><rect x="5.9" y="9.5" width="5.4" height="7.1" fill="#3f7cc0"/></svg>
<span style="left:920.30px;top:84.00px;font-size:9.0px;color:#444;-webkit-text-stroke:0.08px;letter-spacing:0.033px;">Format</span>
<svg style="left:933.20px;top:98.20px;" width="3.6" height="2.2" viewBox="0 0 3.6 2.2"><path d="M0 0h3.6l-1.8 2.2z" fill="#5a5a5a"/></svg>
<span style="left:884.00px;top:111.00px;font-size:9.0px;color:#6a6a6a;-webkit-text-stroke:0.08px;letter-spacing:-0.186px;">Zellen</span>
<svg style="left:961.00px;top:54.60px;" width="12" height="12" viewBox="0 0 12 12"><path d="M10.8 2.6V0.6H0.8L6 5.8L0.8 10.9H10.8V8.8" fill="none" stroke="#444" stroke-width="1.2"/></svg>
<span style="left:975.70px;top:58.00px;font-size:9.0px;color:#444;-webkit-text-stroke:0.08px;letter-spacing:0.386px;">AutoSumme</span>
<svg style="left:961.40px;top:72.40px;" width="12" height="12.5" viewBox="0 0 12 12.5"><rect x="0.5" y="0.5" width="10.4" height="11.2" fill="#fafafa" stroke="#8a8a8a" stroke-width="0.9"/><rect x="0.5" y="0.5" width="10.4" height="2" fill="#8a8a8a"/><path d="M5.7 4.2V9" stroke="#3f7fc1" stroke-width="1.4"/><path d="M2.9 6.8L5.7 9.8L8.5 6.8" fill="none" stroke="#3f7fc1" stroke-width="1.4"/></svg>
<span style="left:975.70px;top:75.00px;font-size:9.0px;color:#444;-webkit-text-stroke:0.08px;letter-spacing:0.007px;">Füllbereich</span>
<svg style="left:1021.40px;top:78.20px;" width="3.6" height="2.2" viewBox="0 0 3.6 2.2"><path d="M0 0h3.6l-1.8 2.2z" fill="#5a5a5a"/></svg>
<svg style="left:961.40px;top:90.70px;" width="12" height="10" viewBox="0 0 12 10"><path d="M7.4 0.4L10.8 3.2L4.6 9.4L1 6.4z" fill="#e8808f"/><path d="M1 6.4L2.9 4.8L6.3 7.7L4.6 9.4z" fill="#f4c6cc"/></svg>
<span style="left:975.70px;top:93.00px;font-size:9.0px;color:#444;-webkit-text-stroke:0.08px;letter-spacing:-0.104px;">Löschen</span>
<svg style="left:1011.80px;top:95.00px;" width="3.6" height="2.2" viewBox="0 0 3.6 2.2"><path d="M0 0h3.6l-1.8 2.2z" fill="#5a5a5a"/></svg>
<div style="left:372.00px;top:341.00px;width:465.00px;height:357.60px;background:#eeeeee;box-sizing:border-box;border:1px solid #6796c8;box-shadow:0 4px 10px 0 rgba(0,0,0,.2),0 1px 4px 1px rgba(0,0,0,.1),inset 0 0 0 1px #dcecf9;"></div>
<div style="left:373.00px;top:342.00px;width:463.00px;height:23.20px;background:#f7f7f7;"></div>
<span style="left:379.00px;top:350.00px;font-size:9.2px;color:#222;letter-spacing:0.014px;">Zellen formatieren</span>
<span style="left:781.47px;top:349.00px;font-size:9.8px;color:#2a2a2a;">?</span>
<svg style="left:814.60px;top:348.80px;" width="8" height="8" viewBox="0 0 8 8"><path d="M0.3 0.3L7.7 7.7M7.7 0.3L0.3 7.7" stroke="#333" stroke-width="1"/></svg>
<div style="left:377.00px;top:386.40px;width:453.00px;height:281.60px;background:#f7f7f7;box-sizing:border-box;border:1px solid #d9d9d9;"></div>
<div style="left:419.00px;top:372.30px;width:61.30px;height:14.90px;background:#f0f0f0;box-sizing:border-box;border:1px solid #d9d9d9;"></div>
<span style="left:426.00px;top:376.00px;font-size:8.8px;color:#222;letter-spacing:0.175px;">Ausrichtung</span>
<div style="left:479.30px;top:372.30px;width:43.20px;height:14.90px;background:#f0f0f0;box-sizing:border-box;border:1px solid #d9d9d9;"></div>
<span style="left:488.70px;top:376.00px;font-size:8.8px;color:#222;letter-spacing:0.094px;">Schrift</span>
<div style="left:521.50px;top:372.30px;width:47.00px;height:14.90px;background:#f0f0f0;box-sizing:border-box;border:1px solid #d9d9d9;"></div>
<span style="left:529.80px;top:376.00px;font-size:8.8px;color:#222;letter-spacing:-0.194px;">Rahmen</span>
<div style="left:567.50px;top:372.30px;width:53.10px;height:14.90px;background:#f0f0f0;box-sizing:border-box;border:1px solid #d9d9d9;"></div>
<span style="left:576.20px;top:376.00px;font-size:8.8px;color:#222;letter-spacing:0.078px;">Ausfüllen</span>
<div style="left:619.60px;top:372.30px;width:41.00px;height:14.90px;background:#f0f0f0;box-sizing:border-box;border:1px solid #d9d9d9;"></div>
<span style="left:627.80px;top:376.00px;font-size:8.8px;color:#222;letter-spacing:-0.184px;">Schutz</span>
<div style="left:377.70px;top:370.30px;width:42.60px;height:17.30px;background:#f7f7f7;box-sizing:border-box;border:1px solid #d9d9d9;border-bottom:none;"></div>
<div style="left:380.20px;top:373.40px;width:36.60px;height:12.60px;background:transparent;box-sizing:border-box;border:1px dotted #555;"></div>
<span style="left:384.50px;top:376.00px;font-size:8.8px;color:#222;letter-spacing:-0.035px;">Zahlen</span>
<span style="left:384.50px;top:395.00px;font-size:8.8px;color:#222;letter-spacing:-0.102px;"><u>K</u>ategorie:</span>
<div style="left:384.50px;top:406.20px;width:93.70px;height:193.30px;background:#f7f7f7;box-sizing:border-box;border:1px solid #9c9c9c;"></div>
<div style="left:465.00px;top:407.20px;width:12.20px;height:191.30px;background:#ebebeb;"></div>
<svg style="left:467.20px;top:412.60px;" width="6.4" height="3.6" viewBox="0 0 6.4 3.6"><path d="M0.3 3.3L3.2 0.5L6.1 3.3" fill="none" stroke="#c4c4c4" stroke-width="1.1"/></svg>
<svg style="left:467.20px;top:589.40px;" width="6.4" height="3.6" viewBox="0 0 6.4 3.6"><path d="M0.3 0.3L3.2 3.1L6.1 0.3" fill="none" stroke="#c4c4c4" stroke-width="1.1"/></svg>
<div style="left:386.10px;top:518.60px;width:77.40px;height:9.60px;background:#3a97f2;"></div>
<span style="left:387.70px;top:409.00px;font-size:8.8px;color:#222;letter-spacing:-0.015px;">Standard</span>
<span style="left:387.70px;top:419.00px;font-size:8.8px;color:#222;letter-spacing:-0.230px;">Zahl</span>
<span style="left:387.70px;top:429.00px;font-size:8.8px;color:#222;letter-spacing:0.242px;">Währung</span>
<span style="left:387.70px;top:439.00px;font-size:8.8px;color:#222;letter-spacing:0.152px;">Buchhaltung</span>
<span style="left:387.70px;top:449.00px;font-size:8.8px;color:#222;letter-spacing:-0.004px;">Datum</span>
<span style="left:387.70px;top:459.00px;font-size:8.8px;color:#222;letter-spacing:0.018px;">Uhrzeit</span>
<span style="left:387.70px;top:469.00px;font-size:8.8px;color:#222;letter-spacing:-0.118px;">Prozent</span>
<span style="left:387.70px;top:479.00px;font-size:8.8px;color:#222;letter-spacing:-0.078px;">Bruch</span>
<span style="left:387.70px;top:489.00px;font-size:8.8px;color:#222;letter-spacing:-0.027px;">Wissenschaft</span>
<span style="left:387.70px;top:499.00px;font-size:8.8px;color:#222;letter-spacing:-0.335px;">Text</span>
<span style="left:387.70px;top:509.00px;font-size:8.8px;color:#222;letter-spacing:0.057px;">Sonderformat</span>
<span style="left:387.70px;top:519.00px;font-size:8.8px;color:#f4f9ff;letter-spacing:0.145px;">Benutzerdefiniert</span>
<div style="left:485.20px;top:411.40px;width:338.30px;height:24.60px;background:transparent;box-sizing:border-box;border:1px solid #dcdcdc;"></div>
<div style="left:488.20px;top:409.00px;width:33.80px;height:5.00px;background:#f7f7f7;"></div>
<span style="left:489.90px;top:408.00px;font-size:8.8px;color:#222;letter-spacing:-0.077px;">Beispiel</span>
<span style="left:492.30px;top:423.00px;font-size:8.8px;color:#222;letter-spacing:-0.225px;">PS + 20W. - 30.03.17</span>
<span style="left:486.20px;top:441.00px;font-size:8.8px;color:#222;letter-spacing:-0.582px;"><u>T</u>yp:</span>
<div style="left:485.20px;top:452.00px;width:339.40px;height:15.60px;background:#f7f7f7;box-sizing:border-box;border:1px solid #c6c6c6;border-bottom-color:#8a8a8a;"></div>
<span style="left:488.00px;top:455.00px;font-size:8.8px;color:#222;letter-spacing:-0.296px;">&quot;PS + 20W. - &quot;TT.MM.JJ</span>
<div style="left:485.20px;top:467.60px;width:339.40px;height:112.40px;background:#f7f7f7;box-sizing:border-box;border:1px solid #9c9c9c;"></div>
<div style="left:811.60px;top:468.60px;width:12.00px;height:110.40px;background:#ebebeb;"></div>
<svg style="left:812.90px;top:473.80px;" width="6.4" height="3.8" viewBox="0 0 6.4 3.8"><path d="M0.3 3.4L3.2 0.6L6.1 3.4" fill="none" stroke="#4a4a4a" stroke-width="1.2"/></svg>
<svg style="left:812.90px;top:570.40px;" width="6.4" height="3.8" viewBox="0 0 6.4 3.8"><path d="M0.3 0.4L3.2 3.2L6.1 0.4" fill="none" stroke="#4a4a4a" stroke-width="1.2"/></svg>
<div style="left:811.80px;top:539.80px;width:9.80px;height:12.70px;background:#c4c4c4;"></div>
<div style="left:486.80px;top:528.90px;width:323.50px;height:9.60px;background:#3a97f2;"></div>
<span style="left:488.00px;top:470.00px;font-size:8.8px;color:#222;letter-spacing:-0.296px;">&quot;PS + 14W. - &quot;TT.MM.JJ</span>
<span style="left:488.00px;top:480.00px;font-size:8.8px;color:#222;letter-spacing:-0.296px;">&quot;PS + 15W. - &quot;TT.MM.JJ</span>
<span style="left:488.00px;top:490.00px;font-size:8.8px;color:#222;letter-spacing:-0.296px;">&quot;PS + 16W. - &quot;TT.MM.JJ</span>
<span style="left:488.00px;top:500.00px;font-size:8.8px;color:#222;letter-spacing:-0.296px;">&quot;PS + 17W. - &quot;TT.MM.JJ</span>
<span style="left:488.00px;top:510.00px;font-size:8.8px;color:#222;letter-spacing:-0.296px;">&quot;PS + 18W. - &quot;TT.MM.JJ</span>
<span style="left:488.00px;top:520.00px;font-size:8.8px;color:#222;letter-spacing:-0.296px;">&quot;PS + 19W. - &quot;TT.MM.JJ</span>
<span style="left:488.00px;top:530.00px;font-size:8.8px;color:#f4f9ff;letter-spacing:-0.296px;">&quot;PS + 20W. - &quot;TT.MM.JJ</span>
<span style="left:488.40px;top:540.00px;font-size:8.8px;color:#222;letter-spacing:-0.032px;">#.##</span>
<span style="left:488.00px;top:550.00px;font-size:8.8px;color:#222;letter-spacing:-0.095px;">&quot;1 W. [ &quot;0&quot; D ]&quot;</span>
<span style="left:488.00px;top:560.00px;font-size:8.8px;color:#222;letter-spacing:-0.115px;">&quot;2 W.  [ &quot;0&quot; D ]&quot;</span>
<span style="left:488.00px;top:570.00px;font-size:8.8px;color:#222;letter-spacing:-0.095px;">&quot;3 W. [ &quot;0&quot; D ]&quot;</span>
<div style="left:767.00px;top:585.20px;width:56.80px;height:16.20px;background:#e3e3e3;box-sizing:border-box;border:1px solid #b3b3b3;"></div>
<span style="left:779.50px;top:590.00px;font-size:8.8px;color:#222;letter-spacing:-0.167px;"><u>L</u>öschen</span>
<span style="left:384.90px;top:613.00px;font-size:8.8px;color:#222;letter-spacing:0.068px;">Geben Sie Ihr Zahlenformat ein, unter Verwendung eines der bestehenden Zahlenformate als Ausgangspunkt.</span>
<div style="left:709.30px;top:675.20px;width:56.40px;height:16.00px;background:#e3e3e3;box-sizing:border-box;border:1.6px solid #3d8ad6;"></div>
<span style="left:731.60px;top:680.00px;font-size:8.8px;color:#222;letter-spacing:-0.657px;">OK</span>
<div style="left:774.10px;top:675.20px;width:56.50px;height:16.00px;background:#e3e3e3;box-sizing:border-box;border:1px solid #b3b3b3;"></div>
<span style="left:780.90px;top:680.00px;font-size:8.8px;color:#222;letter-spacing:0.004px;">Abbrechen</span>
<svg style="left:349.00px;top:105.40px;filter:drop-shadow(1.4px 1.4px 1.1px rgba(0,0,0,.3));" width="37.2" height="36.6" viewBox="0 0 37.2 36.6"><rect x="0.90" y="0.90" width="29.40" height="28.80" fill="none" stroke="#f0a9ac" stroke-width="2.80" stroke-opacity=".5"/><rect x="0.90" y="0.90" width="29.40" height="28.80" fill="none" stroke="#d32a30" stroke-width="1.80"/></svg>
<svg style="left:30.10px;top:622.90px;filter:drop-shadow(1.4px 1.4px 1.1px rgba(0,0,0,.3));" width="26.7" height="26.3" viewBox="0 0 26.7 26.3"><rect x="0.70" y="0.70" width="19.30" height="18.90" fill="none" stroke="#f0a9ac" stroke-width="2.40" stroke-opacity=".5"/><rect x="0.70" y="0.70" width="19.30" height="18.90" fill="none" stroke="#d32a30" stroke-width="1.40"/></svg>
<svg style="left:484.00px;top:439.20px;filter:drop-shadow(1.4px 1.4px 1.1px rgba(0,0,0,.3));" width="134.8" height="35.4" viewBox="0 0 134.8 35.4"><rect x="0.90" y="0.90" width="127.00" height="27.60" fill="none" stroke="#f0a9ac" stroke-width="2.80" stroke-opacity=".5"/><rect x="0.90" y="0.90" width="127.00" height="27.60" fill="none" stroke="#d32a30" stroke-width="1.80"/></svg>
<svg style="left:362.60px;top:115.40px;" width="10" height="15" viewBox="0 0 10 15"><path d="M0.6 0.8V12.4L3.3 9.8L5.3 14.2L7.1 13.4L5.1 9.1H8.9z" fill="#fdfdfd" stroke="#3c3c3c" stroke-width="0.9" stroke-linejoin="round"/></svg>
<div style="left:0.00px;top:0.00px;width:1.00px;height:739.00px;background:#cdcdcd;"></div>
<div style="left:1023.00px;top:0.00px;width:1.00px;height:739.00px;background:#d2d2d2;"></div>
<div style="left:0.00px;top:0.00px;width:1.00px;height:50.00px;background:#c3edd8;"></div>
<div style="left:1023.00px;top:0.00px;width:1.00px;height:50.00px;background:#c9efdc;"></div>
<div style="left:0.00px;top:0.00px;width:1024.00px;height:1.00px;background:#c6eedb;"></div>
<div style="left:0.00px;top:738.00px;width:1024.00px;height:1.00px;background:#cdcdcd;"></div>
<div style="left:1.00px;top:737.00px;width:1022.00px;height:1.00px;background:#ececec;"></div>
</div></body></html>
